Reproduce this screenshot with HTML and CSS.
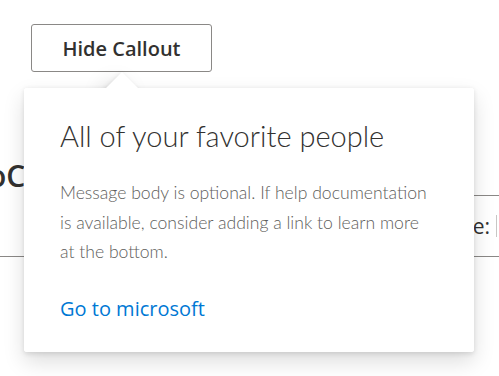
FILE: index.html
```html
<!DOCTYPE html>
<html lang="en">
<head>
<meta charset="utf-8">
<title>Callout</title>
<link rel="stylesheet" href="styles.css">
</head>
<body>
<div class="page">
  <button class="btn" type="button">Hide Callout</button>
  <div class="doc">
    <div class="doc-title">oC</div>
    <div class="doc-row">
      <span class="doc-label">ne:</span>
      <span class="doc-field"></span>
    </div>
  </div>
  <div class="callout" role="dialog">
    <div class="beak"></div>
    <div class="callout-main">
      <h2 class="title">All of your favorite people</h2>
      <p class="subtext">Message body is optional. If help documentation is available, consider adding a link to learn more at the bottom.</p>
      <a class="link" href="#">Go to microsoft</a>
    </div>
  </div>
</div>
</body>
</html>
```
FILE: styles.css
```css
html, body {
  margin: 0;
  padding: 0;
  background: #ffffff;
}
body {
  width: 499px;
  height: 376px;
  overflow: hidden;
  font-family: "Open Sans", "Noto Sans", sans-serif;
  color: #323130;
}
.page {
  position: relative;
  padding-top: 24px;
}
.btn {
  display: block;
  margin-left: 31px;
  width: 181px;
  height: 48px;
  padding: 0;
  background: #ffffff;
  border: 1px solid #8a8886;
  border-radius: 3px;
  font-family: "Open Sans", "Noto Sans", sans-serif;
  font-weight: 600;
  font-size: 20px;
  color: #323130;
}
.doc {
  margin-top: 84px;
  height: 100px;
  display: flex;
  justify-content: space-between;
  border-bottom: 1px solid #8a8886;
}
.doc-title {
  margin-left: -12px;
  font-size: 30px;
  line-height: 40px;
  font-weight: 600;
  color: #323130;
  align-self: flex-start;
}
.doc-row {
  align-self: flex-end;
  width: 120px;
  height: 60px;
  border-top: 1px solid #8a8886;
  display: flex;
  align-items: center;
  justify-content: flex-end;
  gap: 6px;
}
.doc-label {
  font-size: 21px;
  color: #323130;
}
.doc-field {
  width: 2px;
  height: 22px;
  border-left: 1px solid #c8c6c4;
}
.callout {
  position: absolute;
  left: 24px;
  top: 88px;
  width: 450px;
  height: 264px;
  background: #ffffff;
  border-radius: 3px;
  box-shadow: 0 9.6px 21.6px rgba(0, 0, 0, 0.132), 0 1.8px 5.4px rgba(0, 0, 0, 0.108);
}
.beak {
  position: absolute;
  left: 86px;
  top: -11px;
  width: 24px;
  height: 24px;
  background: #ffffff;
  transform: rotate(45deg);
  box-shadow: 0 9.6px 21.6px rgba(0, 0, 0, 0.132), 0 1.8px 5.4px rgba(0, 0, 0, 0.108);
}
.callout-main {
  position: relative;
  height: 100%;
  box-sizing: border-box;
  background: #ffffff;
  border-radius: 3px;
  padding: 28px 36px 0 36px;
}
.title {
  margin: 0;
  font-family: Lato, "Open Sans", sans-serif;
  font-size: 29px;
  line-height: 40px;
  font-weight: 300;
  color: #323130;
}
.subtext {
  margin: 22px 0 0 0;
  font-family: Lato, "Open Sans", sans-serif;
  font-size: 17.6px;
  line-height: 29.5px;
  font-weight: 300;
  color: #605e5c;
}
.link {
  display: inline-block;
  margin-top: 27px;
  font-size: 20px;
  line-height: 30px;
  color: #0078d4;
  text-decoration: none;
}
```
